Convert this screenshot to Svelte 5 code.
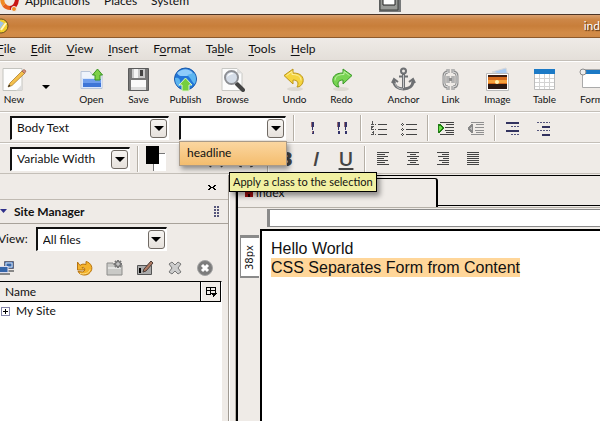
<script>
  const menus = [
    ["", "F", "ile"],
    ["", "E", "dit"],
    ["", "V", "iew"],
    ["", "I", "nsert"],
    ["F", "o", "rmat"],
    ["Ta", "b", "le"],
    ["", "T", "ools"],
    ["", "H", "elp"]
  ];

  const toolGroups = [
    ["Open", "Save", "Publish", "Browse"],
    ["Undo", "Redo"],
    ["Anchor", "Link", "Image", "Table", "Form"]
  ];

  const structureGroups = [
    ["Emphasis", "Strong emphasis"],
    ["Numbered list", "Bulleted list"],
    ["Indent", "Outdent"],
    ["Definition term", "Definition"]
  ];

  const alignments = ["Align left", "Align center", "Align right", "Justify"];
  const fileActions = ["Refresh", "New folder", "Rename", "Delete", "Stop"];

  const alignRows = {
    "Align left": [[0, 12], [0, 8], [0, 11], [0, 7], [0, 11], [0, 8], [0, 12]],
    "Align center": [[0, 12], [3, 6], [0, 12], [3, 7], [1, 10], [3, 6], [0, 12]],
    "Align right": [[0, 12], [5, 7], [1, 11], [6, 6], [2, 10], [5, 7], [0, 12]],
    Justify: [[0, 12], [0, 12], [0, 12], [0, 12], [0, 12], [0, 12], [0, 12]]
  };
</script>

<svelte:head>
  <title>index</title>
</svelte:head>

{#snippet toolIcon(name)}
  <svg width="25" height="25" viewBox="0 0 25 25" aria-hidden="true">
    {#if name === "New"}
      <path d="M1 1.500h19v22H1z" fill="#fdfdfd" stroke="#c4c4bf" />
      <path d="M14 23.500l6-6v6z" fill="#ddd" />
      <path d="M6 20l2-4L20 4l2.500 2.500L10 18.500z" fill="#f4c04c" stroke="#a37222" stroke-width=".7" />
      <path d="M6 20l1-2.500L8.500 19z" fill="#222" />
      <path d="M20 4l2-1.500L24 4l-1.500 2.500z" fill="#d88f78" stroke="#98604c" stroke-width=".7" />
    {:else if name === "Open"}
      <path d="M2 4.500h9l2 3h10v14H2z" fill="#eef3fb" stroke="#b8c4d8" />
      <path d="M3.500 11.500h19v9h-19z" fill="#6c9cec" stroke="#d9e6fb" />
      <path d="M4 16h18v4H4z" fill="#3e75d7" />
      <path d="M18.500 2l5 6h-2.500v5h-5V8h-2.500z" fill="#7ed048" stroke="#3a9420" />
    {:else if name === "Save"}
      <path d="M2.500 1.500h20v22h-20z" fill="#777" stroke="#5b5b5b" />
      <path d="M6 2h13v9H6z" fill="#c9c9c9" />
      <path d="M8 2h4v9H8z" fill="#f4f4f4" />
      <path d="M14 3h3v6h-3z" fill="#444" />
      <path d="M5 13h15v10H5z" fill="#fafafa" />
      <path d="M5 20h15v3H5z" fill="#ddd" />
    {:else if name === "Publish"}
      <circle cx="12.500" cy="12" r="11" fill="#2276d8" stroke="#1859a9" />
      <path d="M4 6c5-5 12-5 16 0-2 4-5 3-8 3S6 10 4 6z" fill="#8ecbfa" />
      <path d="M2 11c4-1 6 2 5 6l-1 3C3 18 2 15 2 11zM14 8l7-2c3 4 2 8 1 11-3-1-3-5-8-9z" fill="#5cb5f0" />
      <path d="M12.500 11l6.500 7h-3v6H9v-6H6z" fill="#75ce3e" stroke="#e0f6ce" />
    {:else if name === "Browse"}
      <path d="M2 1.500h15l5 5v17H2z" fill="#fcfcfc" stroke="#c8c8c4" />
      <path d="M17 1.500v5h5z" fill="#ddd" />
      <path d="M17 17l6 6" stroke="#444" stroke-width="4" stroke-linecap="round" />
      <circle cx="11.500" cy="10.500" r="6.500" fill="#d5dde8" stroke="#8d8f94" stroke-width="2" />
      <path d="M7 10c1-4 5-5 7-3-3 0-5 1-7 3z" fill="#fff" />
    {:else if name === "Undo" || name === "Redo"}
      <g transform={name === "Redo" ? "translate(25 0) scale(-1 1)" : undefined}>
        <ellipse cx="13" cy="22" rx="8" ry="2" fill="#ddd9d2" />
        <path
          d="M2 8.500L11 2v4c8 0 11 4 10 9-1 3-3 5-6 5 2-4 1-7-4-7v4z"
          fill={name === "Undo" ? "#f5d43e" : "#78d452"}
          stroke={name === "Undo" ? "#bd961a" : "#3a9a28"} />
        <path d="M4.500 8.500L10 4.500v3c6 0 9 2 9 6" fill="none" stroke={name === "Undo" ? "#fdf0a0" : "#c0f2a4"} />
      </g>
    {:else if name === "Anchor"}
      <g fill="none" stroke="#6e7073">
        <circle cx="12.500" cy="4" r="2.500" stroke-width="2" />
        <path d="M12.500 7v15" stroke-width="3" />
        <path d="M8 9.500h9" stroke-width="2" />
        <path d="M3 14c0 5 4 8 9.500 8S22 19 22 14" stroke-width="3" />
        <path d="M1 16l2-4 4 3M24 16l-2-4-4 3" stroke-width="2" />
        <path d="M12.500 8v13M4 16c1 4 4 6 8 6" stroke="#c6c8ca" />
      </g>
    {:else if name === "Link"}
      <g fill="none">
        <path
          d="M10 2v4M15 2v4M10 19v4M15 19v4M10 5q-4 0-4 4v7q0 4 4 4M15 5q4 0 4 4v7q0 4-4 4M10 9v7M15 9v7M10 12.500h5"
          stroke="#8d8d8d"
          stroke-width="3" />
        <path
          d="M10 2v4M15 2v4M10 19v4M15 19v4M10 5q-4 0-4 4v7q0 4 4 4M15 5q4 0 4 4v7q0 4-4 4M10 9v7M15 9v7"
          stroke="#d9d9d9" />
      </g>
    {:else if name === "Image"}
      <path d="M7 5l14-4 2 8z" fill="#a8caf2" stroke="#d8d8d8" />
      <path d="M1.500 6.500h22v17h-22z" fill="#fff" stroke="#bbb" />
      <path d="M3 8h19v14H3z" fill="#3b1b10" />
      <path d="M3 10h19v7H3z" fill="#d46a1c" />
      <path d="M3 13h19v3H3z" fill="#f6a03b" />
      <circle cx="12" cy="15" r="2" fill="#fff2b0" />
      <path d="M3 17h19v5H3z" fill="#2a1712" />
    {:else if name === "Table"}
      <path d="M2.500 2.500h20v20h-20z" fill="#fff" stroke="#bbb" />
      <path d="M2 2h21v5H2z" fill="#1c7ac6" />
      <path d="M3 11.500h19M3 15.500h19M3 19.500h19M7.500 7v15M12.500 7v15M17.500 7v15" stroke="#d3d3d3" />
    {:else}
      <path d="M3.500 2.500h20v18h-20z" fill="#fff" stroke="#aaa" />
      <path d="M4 3h20v4H4z" fill="#1c7ac6" />
      <circle cx="4" cy="5" r="3" fill="#eee" stroke="#8a8a8a" />
    {/if}
  </svg>
{/snippet}

{#snippet structureIcon(name)}
  <svg width="16" height="16" viewBox="0 0 16 16" shape-rendering="crispEdges" aria-hidden="true">
    {#if name === "Emphasis"}
      <path d="M7 2h3v5H9v3H8V7H7zM8 11h2v3H8z" fill="#33336a" />
      <path d="M7 2h1v5H7zM8 11h1v2H8z" fill="#9a6a70" />
    {:else if name === "Strong emphasis"}
      <path d="M3 2h3v5H5v3H4V7H3zM4 11h2v3H4zM10 2h3v5h-1v3h-1V7h-1zM11 11h2v3h-2z" fill="#33336a" />
      <path d="M3 2h1v5H3zM10 2h1v5h-1z" fill="#9a6a70" />
    {:else if name === "Numbered list"}
      <path d="M7 4.500h9M7 9.500h9M7 14.500h9" stroke="#444" />
      <path d="M1 1h1v3H1zM0 4h3v1H0zM0 6h3v1H2v1H1v1h2v1H0zM0 11h3v4H0v-1h2v-1H1v-1h1v-1H0zM4 4h1v1H4zM4 9h1v1H4zM4 14h1v1H4z" fill="#555" />
    {:else if name === "Bulleted list"}
      <path d="M5 4.500h11M5 9.500h11M5 14.500h11" stroke="#444" />
      <path d="M1 3h1v1H1zM0 4h1v1H0zM2 4h1v1H2zM1 5h1v1H1zM1 8h1v1H1zM0 9h1v1H0zM2 9h1v1H2zM1 10h1v1H1zM1 13h1v1H1zM0 14h1v1H0zM2 14h1v1H2zM1 15h1v1H1z" fill="#444" />
    {:else if name === "Indent"}
      <path d="M2 2.500h14M8 4.500h8M7 7.500h9M7 10.500h9M8 12.500h8M2 14.500h14" stroke="#444" />
      <path d="M0 4h2l4 4-4 5H0z" fill="#217c14" />
      <path d="M1 6h1l2 2-2 3H1z" fill="#6ae04a" />
    {:else if name === "Outdent"}
      <path d="M3 2.500h13M8 4.500h8M7 7.500h9M7 10.500h9M8 12.500h8M3 14.500h13" stroke="#909090" />
      <path d="M5 4v9H3L0 9V8l3-4z" fill="#888" />
      <path d="M4 6v5L2 8z" fill="#bbb" />
    {:else if name === "Definition term"}
      <path d="M1 2h13v2H1zM1 10h13v2H1z" fill="#33335f" />
      <path d="M6 6.500h8M6 14.500h8" stroke="#55557d" stroke-dasharray="2 1" />
    {:else}
      <path d="M7 6h8v2H7zM7 14h8v2H7z" fill="#33335f" />
      <path d="M2 2.500h13M2 10.500h13" stroke="#55557d" stroke-dasharray="2 1" />
    {/if}
  </svg>
{/snippet}

{#snippet fileIcon(name)}
  <svg width="18" height="18" viewBox="0 0 18 18" aria-hidden="true">
    {#if name === "Refresh"}
      <path d="M1.500 3v8h7L6 8.500c3-1 4 3 1 4.500l-5-.5c2 4 9 5 12 1 4-4 1-10-4-11v3c-3-1-5 0-6 1z" fill="#f4b32c" stroke="#b8740f" />
      <path d="M4 14.500c4 1 9 0 10-4" fill="none" stroke="#fde08a" />
    {:else if name === "New folder"}
      <path d="M1 4h6l1 2h8v10H1z" fill="#c9c9c6" stroke="#8c8c8a" />
      <path d="M2 9h13" stroke="#fff" />
      <path d="M12 1v8M8 5h8M9 2l6 6M15 2L9 8" stroke="#777" stroke-width="2" />
      <path d="M12 3v4M10 5h4" stroke="#ddd" />
    {:else if name === "Rename"}
      <path d="M1.500 6.500h14v9h-14z" fill="#aaa" stroke="#555" />
      <path d="M4 9v5" stroke="#000" stroke-width="2" />
      <path d="M7 13l1-3 7-8 2 2-7 8z" fill="#b07a62" stroke="#4b3d38" />
    {:else if name === "Delete"}
      <path d="M3 5l3-2 3 3 3-3 3 2-3 4 3 4-3 2-3-3-3 3-3-2 3-4z" fill="#ccc" stroke="#777" />
    {:else}
      <circle cx="9" cy="9" r="7.500" fill="#7c7c7c" stroke="#a4a4a4" />
      <path d="M6 6l6 6M12 6l-6 6" stroke="#fff" stroke-width="3" />
    {/if}
  </svg>
{/snippet}

{#snippet arrow()}
  <span class="arrow">
    <svg width="10" height="5" viewBox="0 0 10 5" aria-hidden="true"><path d="M0 0h10L5 5z" /></svg>
  </span>
{/snippet}

<div class="desktop">
  <nav class="panel" aria-label="Desktop">
    <svg class="logo" width="20" height="20" viewBox="0 0 20 20" aria-hidden="true">
      <path d="M3 5a8 8 0 0 0 1 8" fill="none" stroke="#f08a24" stroke-width="4" />
      <path d="M4 13a8 8 0 0 0 7 3" fill="none" stroke="#e8621c" stroke-width="4" />
      <path d="M10 16q7-1 7-10" fill="none" stroke="#c81414" stroke-width="4" />
      <circle cx="14" cy="17" r="2.500" fill="#f08a24" stroke="#efebe6" />
    </svg>
    <button>Applications</button>
    <button>Places</button>
    <button>System</button>
    <svg class="windows" width="22" height="14" viewBox="0 0 22 14" aria-hidden="true">
      <path d="M0 0h22v13H0z" fill="#77797a" />
      <path d="M1 0h18v11H1z" fill="#999b98" stroke="#3e403e" />
      <path d="M4 0h12v6H4z" fill="#fff" stroke="#222" />
    </svg>
  </nav>

  <header class="titlebar">
    <svg width="10" height="16" viewBox="0 0 10 16" aria-hidden="true">
      <circle cx="1" cy="8" r="7" fill="#f3cf2e" stroke="#6a5220" />
      <path d="M0 3l4 2-4 6z" fill="#9ec3e8" />
      <path d="M1 12l5-7" stroke="#fff8c8" stroke-width="2" />
    </svg>
    <span>ind</span>
  </header>

  <nav class="menubar" aria-label="Application">
    {#each menus as [before, key, after]}
      <button>{before}<u>{key}</u>{after}</button>
    {/each}
  </nav>

  <div class="toolbar">
    <button class="tool new">{@render toolIcon("New")}New</button>
    <button class="more" aria-label="More new documents">
      <svg width="8" height="4" viewBox="0 0 8 4" aria-hidden="true"><path d="M0 0h8L4 4z" /></svg>
    </button>
    {#each toolGroups as group}
      <div class="tool-group">
        {#each group as name}
          <button class="tool">{@render toolIcon(name)}{name}</button>
        {/each}
      </div>
    {/each}
  </div>

  <div class="formatbar">
    <div class="select paragraph">
      <select aria-label="Paragraph format"><option>Body Text</option></select>
      {@render arrow()}
    </div>
    <div class="select class-name">
      <select aria-label="Class"><option></option></select>
      {@render arrow()}
      <button class="choice">headline</button>
      <div class="tooltip" role="tooltip">Apply a class to the selection</div>
    </div>
    {#each structureGroups as group}
      <span class="separator"></span>
      {#each group as name}
        <button class="format" aria-label={name}>{@render structureIcon(name)}</button>
      {/each}
    {/each}
  </div>

  <div class="formatbar">
    <div class="select font">
      <select aria-label="Font"><option>Variable Width</option></select>
      {@render arrow()}
    </div>
    <span class="separator"></span>
    <button class="format" aria-label="Colors">
      <svg width="20" height="25" viewBox="0 0 20 25" shape-rendering="crispEdges" aria-hidden="true">
        <path d="M7 7h13v18H7z" fill="#fff" />
        <path d="M7.500 25V7.500H19" fill="none" stroke="#777" />
        <path d="M0 0h13v18H0z" />
      </svg>
    </button>
    <button class="format" aria-label="Highlight">
      <svg width="12" height="12" viewBox="0 0 12 12" aria-hidden="true">
        <path d="M1 9l6-6v6z" fill="#ddd" stroke="#333" />
      </svg>
    </button>
    <button class="format letter" aria-label="Smaller">
      <svg width="14" height="18" viewBox="0 0 14 18" aria-hidden="true"><path d="M1 17l6-12 6 12M4 13h6" fill="none" stroke="#444" stroke-width="2" /></svg>
    </button>
    <button class="format letter" aria-label="Larger">
      <svg width="14" height="18" viewBox="0 0 14 18" aria-hidden="true"><path d="M1 17L7 2l6 15M3 12h8" fill="none" stroke="#444" stroke-width="3" /></svg>
    </button>
    <span class="separator"></span>
    <button class="format style"><b>B</b></button>
    <button class="format style"><i>I</i></button>
    <button class="format style"><u>U</u></button>
    <span class="separator"></span>
    {#each alignments as name}
      <button class="format" aria-label={name}>
        <svg width="12" height="13" viewBox="0 0 12 13" shape-rendering="crispEdges" aria-hidden="true">
          {#each alignRows[name] as [x, width], row}
            <rect {x} y={row * 2} {width} height="1" fill="#444" />
          {/each}
        </svg>
      </button>
    {/each}
  </div>

  <div class="workspace">
    <aside>
      <div class="close-row">
        <button aria-label="Close sidebar">
          <svg width="8" height="5" viewBox="0 0 8 5" shape-rendering="crispEdges" aria-hidden="true">
            <path d="M0 0h2v1h1v1h2V1h1V0h2v1H7v1H6v1h1v1h1v1H6V4H5V3H3v1H2v1H0V4h1V3h1V2H1V1H0z" />
          </svg>
        </button>
      </div>
      <div class="sidebar-title">
        <svg width="7" height="5" viewBox="0 0 7 5" aria-hidden="true"><path d="M0 0h7L3.500 4z" fill="#30308a" /></svg>
        <h2>Site Manager</h2>
        <span class="grip"></span>
      </div>
      <div class="view-row">
        <label for="view">View:</label>
        <div class="select view">
          <select id="view"><option>All files</option></select>
          {@render arrow()}
        </div>
      </div>
      <div class="file-actions">
        <button class="sites" aria-label="Edit sites">
          <svg width="15" height="16" viewBox="0 0 15 16" aria-hidden="true">
            <path d="M4.500 1.500h9v7h-9z" fill="#4f7fc0" stroke="#667" />
            <path d="M6 3h6v4H6z" fill="#3565a9" stroke="#d4e1f2" />
            <path d="M5 11h9" stroke="#888" stroke-width="2" />
            <path d="M-2 6.500h10v6H-2z" fill="#3565a9" stroke="#dde" />
            <path d="M-1 14h11" stroke="#888" stroke-width="2" />
          </svg>
        </button>
        {#each fileActions as name}
          <button aria-label={name}>{@render fileIcon(name)}</button>
        {/each}
      </div>
      <div class="tree">
        <div class="tree-head">
          <span>Name</span>
          <button aria-label="Choose columns">
            <svg width="11" height="10" viewBox="0 0 11 10" shape-rendering="crispEdges" aria-hidden="true">
              <path d="M0 0h10v1H0zM0 3h10v1H0zM0 0h1v8H0zM4 0h1v8H4zM9 0h1v6H9zM0 7h5v1H0z" />
              <path d="M5 6h6v1h-1v1H9v1H8v1H7V8H6V7H5z" />
            </svg>
          </button>
        </div>
        <div class="tree-row">
          <button aria-label="Expand My Site">
            <svg width="9" height="9" viewBox="0 0 9 9" shape-rendering="crispEdges" aria-hidden="true">
              <path d="M.5.500h8v8h-8z" fill="#fff" stroke="#8484a8" />
              <path d="M2 4h5v1H2zM4 2h1v5H4z" />
            </svg>
          </button>
          <span>My Site</span>
        </div>
      </div>
    </aside>

    <div class="splitter"></div>

    <section class="editor">
      <div class="tabs">
        <button class="tab">
          <svg width="8" height="8" viewBox="0 0 8 8" shape-rendering="crispEdges" aria-hidden="true">
            <path d="M0 0h8v8H0z" fill="#a01010" />
            <path d="M2 1h4v2H2zM3 5h2v3H3z" fill="#200" />
          </svg>
          index
        </button>
        <span class="tab-rest"></span>
      </div>
      <div class="ruler"></div>
      <div class="page-row">
        <div class="side-ruler"><span>38px</span></div>
        <main>
          <p>Hello World</p>
          <p><mark>CSS Separates Form from Content</mark></p>
        </main>
      </div>
    </section>
  </div>
</div>

<style>
  :global(body) {
    margin: 0;
    overflow: hidden;
  }

  .desktop {
    display: flex;
    flex-direction: column;
    height: 100vh;
    overflow: hidden;
    background: #efebe7;
    color: #111;
    font: 12px/16px Lato, "Open Sans", sans-serif;
  }

  button {
    padding: 0;
    border: 0;
    background: none;
    color: inherit;
    font: inherit;
    white-space: nowrap;
  }

  svg {
    display: block;
    flex: none;
  }

  .panel {
    display: flex;
    flex: none;
    align-items: flex-end;
    gap: 14px;
    height: 9px;
    padding-bottom: 5px;
    overflow: hidden;
  }

  .logo {
    margin-bottom: -3px;
    margin-right: -9px;
  }

  .windows {
    margin: 0 0 -4px 176px;
  }

  .titlebar {
    display: flex;
    flex: none;
    align-items: center;
    justify-content: space-between;
    height: 22px;
    border-top: 1px solid #4b3426;
    border-bottom: 1px solid #8e5a2b;
    background: linear-gradient(#d9a070, #cd8748 20%, #c87e3a 50%, #d28b47 80%, #cf8a48);
    color: #fff;
    text-shadow: 1px 1px 1px #3d220c;
  }

  .menubar {
    display: flex;
    flex: none;
    gap: 15px;
    height: 22px;
    margin-left: -3px;
    border-bottom: 1px solid #c4bfb8;
    background: linear-gradient(#efebe7, #e4dfd9);
  }

  u {
    text-underline-offset: 2px;
  }

  .toolbar {
    display: flex;
    flex: none;
    align-items: flex-start;
    height: 44px;
    padding-top: 5px;
    border-top: 1px solid #fff;
    border-bottom: 1px solid #c4bfb8;
    font-size: 10px;
  }

  .tool-group {
    display: flex;
    flex: none;
    margin-right: 15px;
  }

  .tool {
    display: flex;
    flex: none;
    flex-direction: column;
    align-items: center;
    width: 47px;
    line-height: 14px;
  }

  .new {
    width: 28px;
  }

  .more {
    display: flex;
    flex: none;
    justify-content: center;
    width: 36px;
    margin-right: 4px;
    padding: 18px 0;
  }

  .formatbar {
    display: flex;
    flex: none;
    align-items: center;
    height: 29px;
    padding-left: 10px;
    border-top: 1px solid #fff;
    border-bottom: 1px solid #c4bfb8;
  }

  .select {
    position: relative;
    flex: none;
    height: 24px;
  }

  .paragraph {
    width: 159px;
    margin-right: 10px;
  }

  .class-name {
    width: 107px;
    margin-right: 4px;
  }

  .font {
    width: 120px;
    margin-right: 4px;
  }

  .view {
    width: 131px;
  }

  select {
    appearance: none;
    width: 100%;
    height: 100%;
    padding: 0 22px 0 5px;
    border: 1px solid #fff;
    border-top: 2px solid #111;
    border-left: 2px solid #111;
    border-radius: 0;
    background: #fff;
    color: inherit;
    font: inherit;
  }

  .arrow {
    position: absolute;
    top: 3px;
    right: 2px;
    display: flex;
    align-items: center;
    justify-content: center;
    width: 15px;
    height: 17px;
    border: 1px solid #706a64;
    border-radius: 3px;
    background: linear-gradient(#f6f4f1, #e6e1dc);
    pointer-events: none;
  }

  .choice {
    position: absolute;
    z-index: 2;
    top: 25px;
    left: 0;
    width: 108px;
    height: 25px;
    padding-left: 7px;
    border: 1px solid #a99a88;
    background: linear-gradient(#fbd6a0, #f4bd6e);
    box-shadow: 2px 3px 5px #0006;
    text-align: left;
  }

  .tooltip {
    position: absolute;
    z-index: 3;
    top: 56px;
    left: 50px;
    padding: 1px 3px;
    border: 1px solid #000;
    background: #f1f0a2;
    box-shadow: 3px 4px 5px #0006;
    font-size: 11px;
    white-space: nowrap;
  }

  .separator {
    flex: none;
    width: 1px;
    height: 26px;
    margin: 0 2px 0 3px;
    border-left: 1px solid #b5afa6;
    background: #fff;
  }

  .format {
    display: flex;
    flex: none;
    align-items: center;
    justify-content: center;
    width: 30px;
    height: 26px;
  }

  .letter + .separator {
    margin-left: 6px;
  }

  .style {
    color: #444;
    font: 600 20px/26px "Open Sans", sans-serif;
  }

  .workspace {
    display: flex;
    flex: 1;
    min-height: 0;
    padding-top: 1px;
  }

  aside {
    display: flex;
    flex: none;
    flex-direction: column;
    width: 228px;
    border-right: 1px solid #a09a92;
  }

  .close-row {
    display: flex;
    align-items: center;
    justify-content: flex-end;
    height: 24px;
    padding-right: 12px;
    border-bottom: 1px solid #c0bab2;
  }

  .sidebar-title {
    display: flex;
    align-items: center;
    gap: 7px;
    height: 23px;
    border-bottom: 1px solid #a8a29a;
  }

  h2 {
    flex: 1;
    margin: 0;
    font-size: 12px;
  }

  .grip {
    width: 6px;
    height: 12px;
    margin-right: 8px;
    background: radial-gradient(circle at 1px 1px, #55557a 0 1px, transparent 1px) 0 0 / 3px 3px;
  }

  .view-row {
    display: flex;
    align-items: center;
    gap: 8px;
    height: 30px;
    margin-left: -2px;
  }

  .file-actions {
    display: flex;
    align-items: center;
    gap: 12px;
    height: 27px;
  }

  .sites {
    margin-right: 49px;
  }

  .tree {
    flex: 1;
    margin-right: 6px;
    border-top: 1px solid #000;
    border-right: 1px solid #fff;
    background: #fff;
  }

  .tree-head {
    display: flex;
    height: 19px;
    border-bottom: 1px solid #000;
    background: #efebe7;
    line-height: 20px;
  }

  .tree-head span {
    flex: 1;
    padding-left: 5px;
    border-right: 1px solid #000;
  }

  .tree-head button {
    display: flex;
    align-items: center;
    justify-content: center;
    width: 20px;
    border-right: 1px solid #000;
    border-left: 1px solid #fff;
  }

  .tree-row {
    display: flex;
    align-items: center;
    gap: 6px;
    height: 18px;
    padding-left: 1px;
  }

  .splitter {
    flex: none;
    width: 5px;
    border-right: 1px solid #b5afa6;
    border-left: 1px solid #fff;
  }

  .editor {
    display: flex;
    flex: 1;
    flex-direction: column;
    min-width: 0;
    border-top: 1px solid #000;
    border-left: 2px solid #000;
  }

  .tabs {
    display: flex;
    flex: none;
    height: 29px;
    margin-top: 2px;
    border-bottom: 1px solid #b5b0a8;
  }

  .tab {
    display: flex;
    align-items: center;
    gap: 3px;
    width: 200px;
    padding-left: 7px;
    border-top: 1px solid #000;
    border-right: 2px solid #000;
    border-top-right-radius: 3px;
  }

  .tab-rest {
    flex: 1;
    margin-bottom: 1px;
    border-bottom: 1px solid #000;
  }

  .ruler {
    flex: none;
    height: 16px;
    margin: 1px 0 2px 29px;
    border-top: 1px solid #8a8a8a;
    border-bottom: 1px solid #8a8a8a;
    border-left: 3px solid #8a8a8a;
    background: #fff;
  }

  .page-row {
    display: flex;
    flex: 1;
    gap: 1px;
    min-height: 0;
  }

  .side-ruler {
    display: flex;
    align-items: center;
    align-self: flex-start;
    justify-content: center;
    width: 18px;
    height: 38px;
    margin-top: 6px;
    margin-left: 2px;
    border-top: 3px solid #8a8a8a;
    border-bottom: 2px solid #8a8a8a;
    border-left: 1px solid #8a8a8a;
    background: #fff;
  }

  .side-ruler span {
    font: 10px/14px "DejaVu Sans", sans-serif;
    writing-mode: vertical-rl;
    transform: rotate(180deg);
  }

  main {
    flex: 1;
    padding: 8px 9px;
    border-top: 2px solid #000;
    border-left: 2px solid #000;
    background: #fff;
    font: 16px/19px "Liberation Sans", Arial, sans-serif;
  }

  p {
    margin: 0;
  }

  mark {
    display: inline-block;
    background: #ffd699;
    color: inherit;
  }
</style>
